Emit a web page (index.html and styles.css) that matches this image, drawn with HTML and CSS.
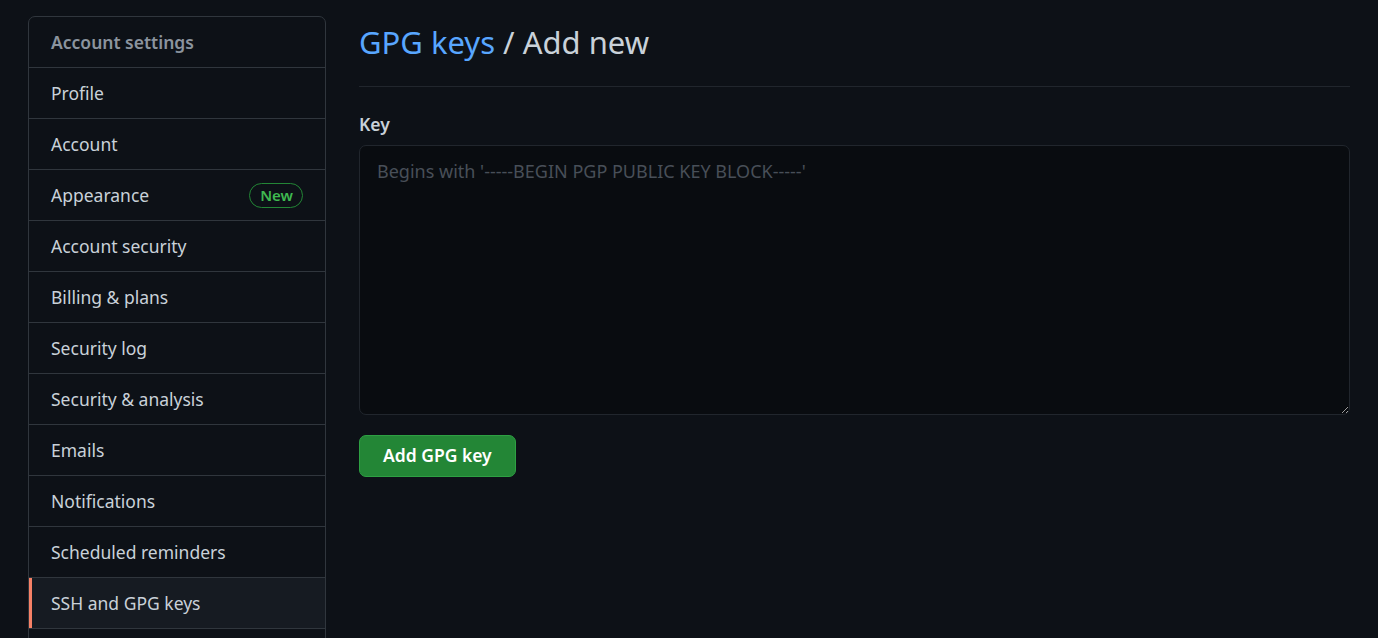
FILE: index.html
```html
<!DOCTYPE html>
<html lang="en">
<head>
<meta charset="utf-8">
<title>GPG keys / Add new</title>
<link rel="stylesheet" href="styles.css">
</head>
<body>
<div class="layout">
  <nav class="menu">
    <div class="menu-heading">Account settings</div>
    <a class="menu-item" href="#">Profile</a>
    <a class="menu-item" href="#">Account</a>
    <a class="menu-item" href="#">Appearance <span class="badge">New</span></a>
    <a class="menu-item" href="#">Account security</a>
    <a class="menu-item" href="#">Billing &amp; plans</a>
    <a class="menu-item" href="#">Security log</a>
    <a class="menu-item" href="#">Security &amp; analysis</a>
    <a class="menu-item" href="#">Emails</a>
    <a class="menu-item" href="#">Notifications</a>
    <a class="menu-item" href="#">Scheduled reminders</a>
    <a class="menu-item selected" href="#">SSH and GPG keys</a>
    <div class="menu-rest"></div>
  </nav>
  <main class="main">
    <div class="subhead">
      <h1 class="subhead-heading"><a href="#" class="link">GPG keys</a> / Add new</h1>
    </div>
    <form class="form">
      <label class="form-label" for="key">Key</label>
      <textarea id="key" class="form-textarea" placeholder="Begins with '-----BEGIN PGP PUBLIC KEY BLOCK-----'"></textarea>
      <button type="button" class="btn-primary">Add GPG key</button>
    </form>
  </main>
</div>
</body>
</html>
```

FILE: styles.css
```css
html, body {
  margin: 0;
  padding: 0;
  background: #0d1117;
  color: #c9d1d9;
  font-family: "Segoe UI", "Noto Sans", "Open Sans", sans-serif;
  font-size: 17.5px;
  line-height: 1.5;
  overflow: hidden;
}

.layout {
  display: flex;
  align-items: flex-start;
  padding: 16px 28px 0 28px;
  gap: 33px;
}

.menu {
  flex: 0 0 298px;
  box-sizing: border-box;
  width: 298px;
  border: 1px solid #30363d;
  border-radius: 7px;
  display: flex;
  flex-direction: column;
  overflow: hidden;
}

.menu-heading {
  height: 51px;
  box-sizing: border-box;
  padding: 0 22px;
  display: flex;
  align-items: center;
  font-weight: 600;
  color: #8b949e;
  border-bottom: 1px solid #30363d;
}

.menu-item {
  height: 51px;
  box-sizing: border-box;
  padding: 0 22px;
  display: flex;
  align-items: center;
  justify-content: space-between;
  color: #c9d1d9;
  text-decoration: none;
  border-bottom: 1px solid #30363d;
  position: relative;
}

.menu-item.selected {
  background: #161b22;
}

.menu-item.selected::before {
  content: "";
  position: absolute;
  left: 0;
  top: 0;
  bottom: 0;
  width: 3px;
  background: #f78166;
}

.menu-rest {
  height: 40px;
}

.badge {
  display: inline-flex;
  align-items: center;
  height: 25px;
  box-sizing: border-box;
  padding: 0 9px 0 10px;
  border: 1px solid #238636;
  border-radius: 13px;
  color: #3fb950;
  font-size: 15px;
  font-weight: 600;
  line-height: 1;
}

.main {
  flex: 1 1 auto;
  min-width: 0;
}

.subhead {
  padding: 3px 0 21px;
  border-bottom: 1px solid #21262d;
}

.subhead-heading {
  margin: 0;
  font-size: 31px;
  font-weight: 400;
  line-height: 46px;
  color: #c9d1d9;
}

.link {
  color: #58a6ff;
  text-decoration: none;
}

.form {
  display: flex;
  flex-direction: column;
  align-items: flex-start;
  padding-top: 24px;
}

.form-label {
  font-weight: 600;
  line-height: 26px;
  color: #c9d1d9;
  margin-bottom: 8px;
}

.form-textarea {
  width: 100%;
  height: 270px;
  box-sizing: border-box;
  background: #090c10;
  border: 1px solid #21262d;
  border-radius: 7px;
  padding: 12px 17px;
  font-family: inherit;
  font-size: 18px;
  line-height: 26px;
  color: #c9d1d9;
  resize: vertical;
  margin: 0;
}

.form-textarea::placeholder {
  color: #484f58;
}

.btn-primary {
  margin-top: 20px;
  height: 42px;
  padding: 0 23px;
  background: #238636;
  border: 1px solid #2ea043;
  border-radius: 7px;
  color: #ffffff;
  font-family: inherit;
  font-size: 17.5px;
  font-weight: 600;
  line-height: 1;
}
```
